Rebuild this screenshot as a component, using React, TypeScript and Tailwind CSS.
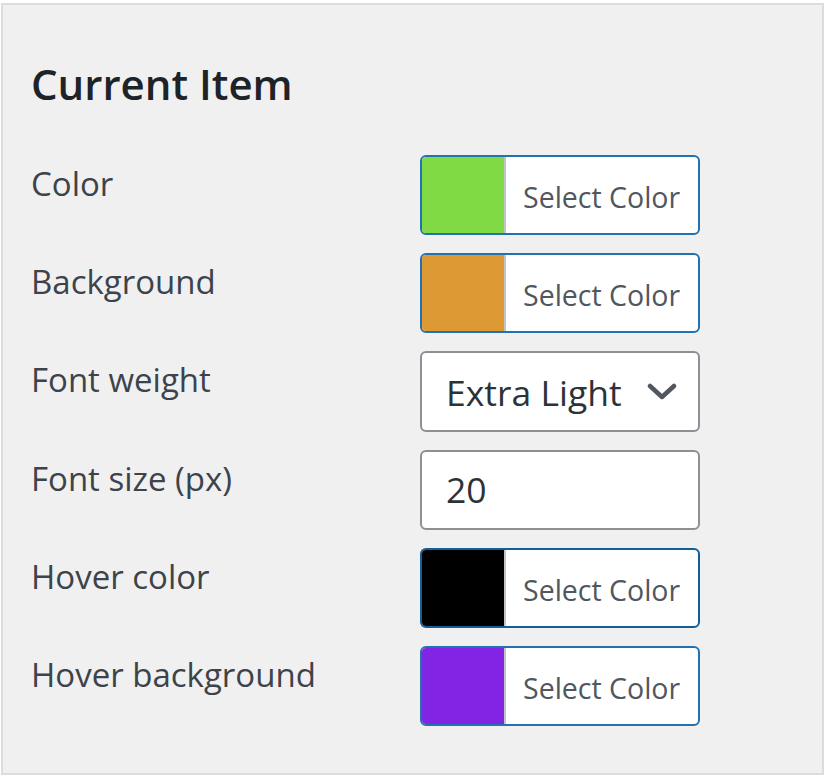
type Row =
  | { label: string; kind: "color"; swatch: string; ring: string }
  | { label: string; kind: "select"; value: string }
  | { label: string; kind: "input"; value: string }

const rows: Row[] = [
  { label: "Color", kind: "color", swatch: "bg-[#80da43]", ring: "border-[#2271b1]" },
  { label: "Background", kind: "color", swatch: "bg-[#dd9933]", ring: "border-[#2271b1]" },
  { label: "Font weight", kind: "select", value: "Extra Light" },
  { label: "Font size (px)", kind: "input", value: "20" },
  { label: "Hover color", kind: "color", swatch: "bg-black", ring: "border-[#135e96]" },
  { label: "Hover background", kind: "color", swatch: "bg-[#8224e3]", ring: "border-[#2271b1]" },
]

const ColorButton = ({ swatch, ring }: { swatch: string; ring: string }) => (
  <button
    className={`flex h-[80px] w-[280px] overflow-hidden rounded-[6px] border-2 ${ring} bg-white text-left`}
    type="button"
  >
    <span className={`h-full w-[84px] ${swatch} border-r-2 border-[#c3c4c7]`} />
    <span className="flex flex-1 items-center pl-[17px] pt-[4px] text-[28.5px] leading-none text-[#50575e]">
      Select Color
    </span>
  </button>
)

const App = () => {
  return (
    <div className="h-[777px] w-[826px] bg-white pt-[3px] pl-[1px] font-['Open_Sans',sans-serif]">
      <div className="h-[772px] w-[823px] border-2 border-[#dcdcde] bg-[#f0f0f1] pl-[28px] pt-[58px]">
        <h2 className="text-[42px] font-semibold leading-none text-[#1d2327]">Current Item</h2>
        <div className="mt-[50px] flex flex-col gap-[18px]">
          {rows.map((row) => (
            <div key={row.label} className="flex items-start">
              <div className="w-[389px] pt-[9px] text-[33px] leading-[40px] text-[#3c434a]">
                {row.label}
              </div>
              {row.kind === "color" && <ColorButton swatch={row.swatch} ring={row.ring} />}
              {row.kind === "select" && (
                <div className="flex h-[81px] w-[280px] items-center justify-between rounded-[6px] border-2 border-[#8c8f94] bg-white pl-[24px] pr-[21px] pt-[2px] text-[35.5px] leading-none text-[#2c3338]">
                  <span>{row.value}</span>
                  <svg width="30" height="18" viewBox="0 0 30 18" className="mb-[2px]">
                    <polyline
                      points="3,3 15,14 27,3"
                      fill="none"
                      stroke="#50575e"
                      strokeWidth="4.5"
                      strokeLinecap="round"
                      strokeLinejoin="round"
                    />
                  </svg>
                </div>
              )}
              {row.kind === "input" && (
                <div className="flex h-[80px] w-[280px] items-center rounded-[6px] border-2 border-[#8c8f94] bg-white pl-[24px] text-[35.5px] leading-none text-[#2c3338]">
                  {row.value}
                </div>
              )}
            </div>
          ))}
        </div>
      </div>
    </div>
  )
}

export default App
